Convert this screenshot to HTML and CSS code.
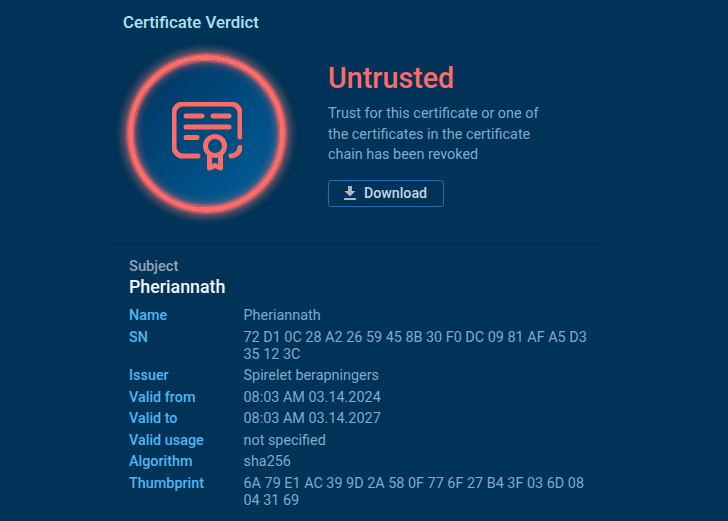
FILE: index.html
```html
<!DOCTYPE html>
<html lang="en">
<head>
<meta charset="utf-8">
<title>Certificate Verdict</title>
<link rel="stylesheet" href="styles.css">
</head>
<body>
<main class="panel">
  <h2 class="panel-title">Certificate Verdict</h2>
  <section class="verdict">
    <div class="badge">
      <svg class="badge-icon" viewBox="0 0 70 70" width="70" height="70" fill="none" stroke="#ff6b68" stroke-width="5" stroke-linecap="round" stroke-linejoin="round">
        <path d="M26 54H11a9 9 0 0 1-9-9V11a9 9 0 0 1 9-9h48a9 9 0 0 1 9 9v24"/>
        <path d="M68 45.500a9 9 0 0 1-9 8.500"/>
        <path d="M14 14h16M41 14h16M14 25h43M14 35.500h11"/>
        <circle cx="43" cy="44" r="9.500"/>
        <path d="M37.500 54v12l5.500-2.500 5.500 2.500V54"/>
      </svg>
    </div>
    <div class="verdict-body">
      <h1 class="verdict-title">Untrusted</h1>
      <p class="verdict-text">Trust for this certificate or one of the certificates in the certificate chain has been revoked</p>
      <button class="download" type="button">
        <svg viewBox="0 0 12 14" width="12" height="14" fill="#a9b8c6"><path d="M4 0h4v5h3.500L6 10.500.5 5H4z"/><rect y="12" width="12" height="2"/></svg>
        <span>Download</span>
      </button>
    </div>
  </section>
  <section class="details">
    <div class="subject-label">Subject</div>
    <div class="subject-name">Pheriannath</div>
    <dl class="fields">
      <dt>Name</dt><dd>Pheriannath</dd>
      <dt>SN</dt><dd>72 D1 0C 28 A2 26 59 45 8B 30 F0 DC 09 81 AF A5 D3 35 12 3C</dd>
      <dt>Issuer</dt><dd>Spirelet berapningers</dd>
      <dt>Valid from</dt><dd>08:03 AM 03.14.2024</dd>
      <dt>Valid to</dt><dd>08:03 AM 03.14.2027</dd>
      <dt>Valid usage</dt><dd>not specified</dd>
      <dt>Algorithm</dt><dd>sha256</dd>
      <dt>Thumbprint</dt><dd>6A 79 E1 AC 39 9D 2A 58 0F 77 6F 27 B4 3F 03 6D 08 04 31 69</dd>
    </dl>
  </section>
</main>
</body>
</html>
```
FILE: styles.css
```css
* { box-sizing: border-box; }
html, body { margin: 0; height: 100%; }
body {
  background: #003357;
  font-family: Roboto, "Liberation Sans", sans-serif;
  overflow: hidden;
}
.panel { width: 488px; margin-left: 113px; }
.panel-title {
  margin: 0;
  padding: 12px 0 0 10px;
  font-size: 16.800px;
  line-height: 20px;
  font-weight: 500;
  color: #a8e6f4;
}
.verdict {
  display: flex;
  height: 212px;
  padding: 23px 0 0 15px;
  border-bottom: 1px solid #00233f;
}
.badge {
  flex: none;
  width: 157px;
  height: 157px;
  display: flex;
  align-items: center;
  justify-content: center;
  border-radius: 50%;
  border: 5px solid #ff6b68;
  background: linear-gradient(135deg, #003a66 15%, #005a94 85%);
  box-shadow: 0 0 3px 1px #ff6b68, 0 0 9px 3px rgba(255, 107, 104, .5), 0 0 7px 8px rgba(120, 110, 130, .3), inset 0 0 3px 1px #ff6b68, inset 0 0 9px 3px rgba(255, 107, 104, .5);
}
.badge-icon { margin: 6px 0 0 1px; }
.verdict-body { margin-left: 43px; padding-top: 7px; }
.verdict-title {
  margin: 0;
  font-size: 28.700px;
  line-height: 33px;
  font-weight: 500;
  color: #ff6b68;
}
.verdict-text {
  margin: 9px 0 0;
  width: 232px;
  font-size: 14.400px;
  line-height: 20.500px;
  color: #7dacd0;
}
.download {
  display: flex;
  align-items: center;
  gap: 8px;
  width: 116px;
  height: 27px;
  margin-top: 14px;
  padding: 0 0 0 15px;
  background: none;
  border: 1px solid #1a72ae;
  border-radius: 3px;
  font: 500 14.200px Roboto, sans-serif;
  color: #c5d8e6;
}
.details { padding: 14px 0 0 16px; }
.subject-label {
  font-size: 14.700px;
  line-height: 17px;
  font-weight: 500;
  color: #93a5b5;
}
.subject-name {
  margin-top: 1px;
  font-size: 17.800px;
  line-height: 21px;
  font-weight: 500;
  color: #f4f8fb;
}
.fields {
  display: grid;
  grid-template-columns: 114.500px 352px;
  row-gap: 4.100px;
  margin: 10px 0 0;
  font-size: 14.400px;
  line-height: 17.400px;
}
.fields dt { font-weight: 500; color: #4db8f5; }
.fields dd { margin: 0; color: #7dacd0; }
```
